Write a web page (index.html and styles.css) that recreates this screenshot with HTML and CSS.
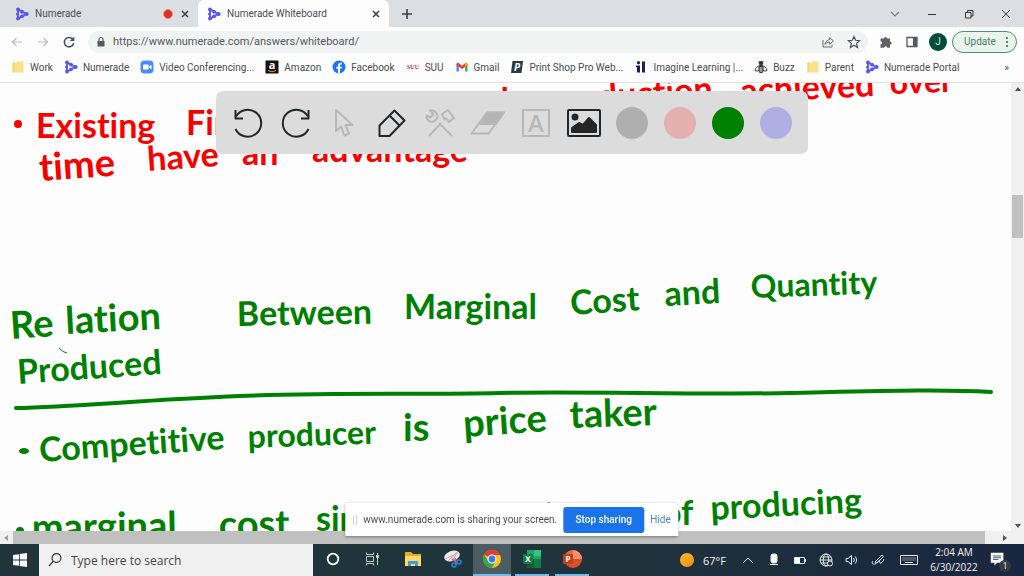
FILE: index.html
```
<!doctype html>
<html lang="en">
<head>
	<meta charset="UTF-8">
	<title>Numerade Whiteboard</title>
	<link rel="stylesheet" href="styles.css">
</head>
<body>
	<svg class="defs" width="0" height="0" aria-hidden="true">
		<symbol id="numerade" viewBox="0 0 14 14">
			<g stroke="#6a66f0" stroke-width="2" fill="none"><path d="M3 2.500L11.500 7L3 11.500M3 2.500V11.500"/></g>
			<g fill="#5b55ee"><circle cx="3" cy="2.600" r="2"/><circle cx="3" cy="11.400" r="2"/><circle cx="11.600" cy="7" r="2"/><circle cx="7" cy="4.700" r="1.900"/><circle cx="7" cy="9.300" r="1.900"/><circle cx="2.500" cy="7" r="1.500"/></g>
		</symbol>
		<symbol id="folder" viewBox="0 0 14 14">
			<path d="M1.500 2.500h4l1 -1h6v11h-11z" fill="#f8e287"/><path d="M1.500 2.500h2v10h-2z" fill="#f1d873"/>
		</symbol>
		<symbol id="cross" viewBox="0 0 10 10"><path d="M2 2l6 6M8 2l-6 6" stroke="#3c4043" stroke-width="1.500"/></symbol>
	</svg>

	<header class="browser">
		<nav class="tabs">
			<div class="tab">
				<svg class="fav"><use href="#numerade"/></svg>
				<span class="title">Numerade</span>
				<span class="rec"></span>
				<button class="x" aria-label="Close tab"><svg width="10" height="10"><use href="#cross"/></svg></button>
			</div>
			<div class="tab active">
				<svg class="fav"><use href="#numerade"/></svg>
				<span class="title">Numerade Whiteboard</span>
				<button class="x" aria-label="Close tab"><svg width="10" height="10"><use href="#cross"/></svg></button>
			</div>
			<button class="newtab" aria-label="New tab"><svg width="12" height="12" viewBox="0 0 12 12"><path d="M6 1v10M1 6h10" stroke="#3c4043" stroke-width="1.600"/></svg></button>
			<div class="win">
				<button aria-label="Search tabs"><svg width="12" height="12" viewBox="0 0 12 12"><path d="M2 4l4 4 4-4" fill="none" stroke="#777b80" stroke-width="1.200"/></svg></button>
				<button aria-label="Minimize"><svg width="12" height="12" viewBox="0 0 12 12"><path d="M2 6.500h8" stroke="#333"/></svg></button>
				<button aria-label="Restore"><svg width="12" height="12" viewBox="0 0 12 12"><path d="M2.500 4.500h5.500v5.500h-5.500zM4.500 4.500v-2h5.500v5.500h-2" fill="none" stroke="#333"/></svg></button>
				<button aria-label="Close"><svg width="12" height="12" viewBox="0 0 12 12"><path d="M2 2l8 8M10 2l-8 8" stroke="#444"/></svg></button>
			</div>
		</nav>

		<div class="address">
			<button aria-label="Back"><svg width="14" height="14" viewBox="0 0 14 14"><path d="M12 7H2.500M6.500 3l-4 4 4 4" fill="none" stroke="#b9bbbe" stroke-width="1.200"/></svg></button>
			<button aria-label="Forward"><svg width="14" height="14" viewBox="0 0 14 14"><path d="M2 7h9.500M7.500 3l4 4-4 4" fill="none" stroke="#b9bbbe" stroke-width="1.200"/></svg></button>
			<button aria-label="Reload"><svg width="14" height="14" viewBox="0 0 14 14"><path d="M11 4.500A4.700 4.700 0 1 0 11.700 8" fill="none" stroke="#4a4d51" stroke-width="1.500"/><path d="M12.300 1.500v4.500h-4.500z" fill="#4a4d51"/></svg></button>
			<div class="omni">
				<svg width="10" height="12" viewBox="0 0 10 12"><path d="M1.500 5h7v5.500h-7z" fill="#55585c"/><path d="M3 5V3.500a2 2 0 0 1 4 0V5" fill="none" stroke="#55585c" stroke-width="1.200"/></svg>
				<input type="text" aria-label="Address" value="https://www.numerade.com/answers/whiteboard/">
				<button aria-label="Share"><svg width="14" height="14" viewBox="0 0 14 14"><path d="M2 5v7h9V9.500" fill="none" stroke="#6b6e72"/><path d="M4 9.500c.5-3 2-4.500 4.500-4.700V2.500L12.500 6 8.500 9.200V7.200C6.500 7.200 5 8 4 9.500z" fill="none" stroke="#6b6e72"/></svg></button>
				<button aria-label="Bookmark"><svg width="14" height="14" viewBox="0 0 14 14"><path d="M7 1.600l1.600 3.700 4 .4-3 2.700.9 4L7 10.300l-3.500 2.100.9-4-3-2.700 4-.4z" fill="none" stroke="#4d5054" stroke-width="1.200"/></svg></button>
			</div>
			<button class="ext" aria-label="Extensions"><svg width="14" height="14" viewBox="0 0 14 14"><path d="M1.500 3.500H5a1.600 1.600 0 1 1 3.200 0H11v3a1.600 1.600 0 1 1 0 3.200v3H8.200a1.500 1.500 0 1 0-3 0H1.500V9.300a1.500 1.500 0 1 0 0-3z" fill="#5f6368"/></svg></button>
			<button class="ext" aria-label="Side panel"><svg width="14" height="14" viewBox="0 0 14 14"><path d="M2 2.500h10v9H2z" fill="none" stroke="#55585c" stroke-width="1.300"/><path d="M8 2.500h4v9H8z" fill="#55585c"/></svg></button>
			<button class="avatar" aria-label="Profile">J</button>
			<button class="update">Update <svg width="4" height="12" viewBox="0 0 4 12" fill="#3c6e57"><circle cx="2" cy="2" r="1.100"/><circle cx="2" cy="6" r="1.100"/><circle cx="2" cy="10" r="1.100"/></svg></button>
		</div>

		<nav class="bookmarks">
			<a href="#"><svg class="fav"><use href="#folder"/></svg>Work</a>
			<a href="#"><svg class="fav"><use href="#numerade"/></svg>Numerade</a>
			<a href="#"><svg class="fav" viewBox="0 0 14 14"><rect x=".5" y=".5" width="13" height="13" rx="4" fill="#4a8cff"/><rect x="3" y="4.500" width="5.500" height="5" rx="1" fill="#fff"/><path d="M9 6.500l2.500-1.700v4.400L9 7.500z" fill="#fff"/></svg>Video Conferencing...</a>
			<a href="#"><svg class="fav" viewBox="0 0 14 14"><rect x=".5" y=".5" width="13" height="13" fill="#111"/><text x="7" y="9" text-anchor="middle" class="glyph" font-size="11" fill="#fff">a</text><path d="M3 10.500q4 2.500 8 0" fill="none" stroke="#f90"/></svg>Amazon</a>
			<a href="#"><svg class="fav" viewBox="0 0 14 14"><circle cx="7" cy="7" r="6.500" fill="#1877f2"/><path d="M6 13.500V8.700H4.300V6.700H6V5.300c0-1.800 1-2.600 2.500-2.600l1.300.1v1.700H9c-.8 0-1 .4-1 1v1.200h1.800l-.3 2H8v4.800z" fill="#fff"/></svg>Facebook</a>
			<a href="#"><svg class="fav" viewBox="0 0 14 14"><text x="7" y="9" text-anchor="middle" class="suu">SUU</text></svg>SUU</a>
			<a href="#"><svg class="fav" viewBox="0 0 14 14"><path d="M1.500 11.500V4h2.300v7.500z" fill="#4285f4"/><path d="M10.200 11.500V4h2.300v7.500z" fill="#34a853"/><path d="M1.500 3.500L3 2.500l4 3.200 4-3.200 1.500 1v1.800L7 9 1.500 5.300z" fill="#ea4335"/><path d="M10.200 4L11 2.600l1.500.9v1.800l-2.300 1.500z" fill="#fbbc04"/></svg>Gmail</a>
			<a href="#"><svg class="fav" viewBox="0 0 14 14"><path d="M2.500 1H13l-1.500 12H1z" fill="#2a3b47"/><text x="7" y="11" text-anchor="middle" class="glyph" font-size="10" font-style="italic" fill="#fff">P</text></svg>Print Shop Pro Web...</a>
			<a href="#"><svg class="fav" viewBox="0 0 14 14" fill="#1d1b6b"><circle cx="4.500" cy="2.700" r="1.600"/><path d="M3 5.500h3V12.500H3zM8 1.500h3V12.500H8zM2 5.500H4v1.500H2z"/></svg>Imagine Learning |...</a>
			<a href="#"><svg class="fav" viewBox="0 0 14 14" fill="none" stroke="#333"><circle cx="7" cy="3.300" r="1.800" fill="#333"/><path d="M7 5.500c-3 0-6 2.500-6 5 1.500 1 3 .5 4-.5M7 5.500c3 0 6 2.500 6 5-1.500 1-3 .5-4-.5M4.500 8h5M4.500 10h5M5 12h4M4.500 1l1.500 1.500M9.500 1L8 2.500"/><path d="M5 6.500h4v5L7 13l-2-1.500z"/></svg>Buzz</a>
			<a href="#"><svg class="fav"><use href="#folder"/></svg>Parent</a>
			<a href="#"><svg class="fav"><use href="#numerade"/></svg>Numerade Portal</a>
			<button class="more" aria-label="More bookmarks">»</button>
		</nav>
	</header>

	<main class="page">
		<!-- whiteboard ink -->
		<svg class="board" viewBox="0 83 1011 448" preserveAspectRatio="xMinYMin slice">
			<g class="ink red">
				<text transform="translate(452 113)">scale</text>
				<text transform="translate(548 112) rotate(-4)">production</text>
				<text transform="translate(741 103) rotate(-3)">achieved</text>
				<text class="small" transform="translate(890 94) rotate(-2)">over</text>
				<circle cx="18" cy="124" r="4"/>
				<text transform="translate(36 138)">Existing</text>
				<text transform="translate(186 135)">Firms</text>
				<text class="big" transform="translate(40 181) rotate(-4)">time</text>
				<text transform="translate(148 171) rotate(-4)">have</text>
				<text transform="translate(242 165)">an</text>
				<text transform="translate(312 162)">advantage</text>
			</g>
			<g class="ink green">
				<text class="big" transform="translate(11 339) rotate(-4)">Re</text>
				<text class="big" transform="translate(66 334) rotate(-3)">lation</text>
				<text transform="translate(237 326) rotate(-1)">Between</text>
				<text transform="translate(404 319)">Marginal</text>
				<text transform="translate(571 315) rotate(-4)">Cost</text>
				<text transform="translate(665 306) rotate(-3)">and</text>
				<text class="small" transform="translate(751 298) rotate(-2)">Quantity</text>
				<text transform="translate(18 384) rotate(-4)">Produced</text>
				<path class="stroke" d="M16 408C75 407 140 400 240 396S420 395 500 393S700 395 790 393S940 389 991 392"/>
				<path class="thin" d="M59 348q3 4 8 5"/>
				<ellipse cx="24" cy="451" rx="5" ry="3"/>
				<text transform="translate(40 462) rotate(-4)">Competitive</text>
				<text class="small" transform="translate(248 448) rotate(-2)">producer</text>
				<text class="big" transform="translate(403 441)">is</text>
				<text class="big" transform="translate(464 437) rotate(-4)">price</text>
				<text class="big" transform="translate(570 428) rotate(-2)">taker</text>
				<circle cx="20" cy="531" r="4"/>
				<text class="big" transform="translate(32 541) rotate(-1)">marginal</text>
				<text class="big" transform="translate(219 538) rotate(-1)">cost</text>
				<text transform="translate(316 531)">simply</text>
				<text transform="translate(430 531)">the</text>
				<text transform="translate(492 526)">cost</text>
				<text transform="translate(662 525)">of</text>
				<text transform="translate(711 520) rotate(-3)">producing</text>
			</g>
		</svg>
		<div class="vbar"><i class="up"></i><b></b><i class="down"></i></div>
		<div class="hbar"><i class="left"></i><b></b><i class="right"></i></div>

		<div class="tools">
			<button aria-label="Undo"><svg viewBox="0 0 36 36" class="dark"><path d="M5.500 24A13.500 13.500 0 1 0 6 11.500"/><path d="M5.500 5v8.500H13"/></svg></button>
			<button aria-label="Redo"><svg viewBox="0 0 36 36" class="dark"><path d="M30.500 24A13.500 13.500 0 1 1 30 11.500"/><path d="M30.500 5v8.500H23"/></svg></button>
			<button aria-label="Select"><svg viewBox="0 0 36 36" class="faint"><path d="M10 5v21l5-4.500 3.500 9 4.500-2-3.500-8.500h7z"/></svg></button>
			<button aria-label="Pen"><svg viewBox="0 0 36 36" class="dark"><path d="M5.500 31V20.500L20.500 5.500l10 10L15.500 31zM15.500 10.500l10 10"/></svg></button>
			<button aria-label="Tools"><svg viewBox="0 0 36 36" class="faint"><path d="M7 31l12-13M30 31L17 18M8 5.500c5-1 9 4 7 8l-3 3c-4 1-8-1-7.500-6l4 2 3-3zM20 9l6-4 6 8-5 4-2.500-3.500-2 1z"/></svg></button>
			<button aria-label="Eraser"><svg viewBox="0 0 36 36" class="faint"><path d="M1.500 28.500L17 7.500h17L18.500 28.500z"/><path d="M9 19L17 7.500h17L26 19z" fill="#b5b5b5"/></svg></button>
			<button aria-label="Text"><svg viewBox="0 0 36 36" class="faint"><path d="M5 5h26v26H5z"/><text x="18" y="27" text-anchor="middle" class="letter">A</text></svg></button>
			<button aria-label="Image"><svg viewBox="0 0 36 36" class="dark"><rect x="2" y="5" width="32" height="26" rx="1"/><circle cx="9" cy="12" r="2.500" fill="#222629"/><path d="M6 27v-4l7-5 4 2 6-7 7 7v7z" fill="#222629"/></svg></button>
			<button aria-label="Black"><span class="dot gray"></span></button>
			<button aria-label="Red"><span class="dot pink"></span></button>
			<button aria-label="Green"><span class="dot green"></span></button>
			<button aria-label="Blue"><span class="dot blue"></span></button>
		</div>
	</main>

	<aside class="sharing">
		<span class="grip"></span>
		<span class="msg">www.numerade.com is sharing your screen.</span>
		<button class="stop">Stop sharing</button>
		<a href="#">Hide</a>
	</aside>

	<footer class="taskbar">
		<button class="start" aria-label="Start"><svg width="14" height="14" viewBox="0 0 14 14" fill="#fff"><path d="M0 2l6-.8v5.400H0zM6.800 1.100L14 0v6.600H6.800zM0 7.400h6v5.400L0 12zM6.800 7.400H14V14l-7.200-1.100z"/></svg></button>
		<label class="search"><svg width="16" height="16" viewBox="0 0 16 16" fill="none" stroke="#333" stroke-width="1.200"><circle cx="9.500" cy="6" r="4.400"/><path d="M6.300 9.200L2 14"/></svg><input type="text" placeholder="Type here to search" aria-label="Type here to search"></label>
		<nav class="apps">
			<button aria-label="Cortana"><svg viewBox="0 0 20 20"><circle cx="10" cy="10" r="5.300" fill="none" stroke="#fff" stroke-width="1.800"/></svg></button>
			<button aria-label="Task View"><svg viewBox="0 0 20 20" fill="none" stroke="#c5ccd0"><path d="M3.500 7.500h7v5h-7zM3.500 3.500v2h7v-2M3.500 16.500v-2h7v2M14.500 4v12"/><path d="M13.500 6.500h2v2h-2z" fill="#fff"/></svg></button>
			<button aria-label="File Explorer"><svg viewBox="0 0 20 20"><path d="M2 3h6l2 2h8v12H2z" fill="#e9a92b"/><path d="M2 7h16v10H2z" fill="#ffd868"/><path d="M5 17v-5h10v5h-3v-2H8v2z" fill="#3f9be0"/></svg></button>
			<button aria-label="Snip"><svg viewBox="0 0 20 20"><ellipse cx="9" cy="7" rx="8" ry="5" fill="#f3e8ec" transform="rotate(-20 9 7)"/><path d="M2 10L15 4M5 12l9-9M9 12l5-8" stroke="#d9a3ad" fill="none"/><path d="M9 10l5 4M12 9l1 5" stroke="#e55360" stroke-width="1.500"/><g fill="none" stroke="#2b88d8" stroke-width="1.500"><circle cx="11" cy="16" r="2"/><circle cx="16" cy="13" r="2"/></g></svg></button>
			<button class="open current" aria-label="Chrome"><svg viewBox="0 0 20 20"><circle cx="10" cy="10" r="9" fill="#fbc116"/><path d="M10 10L2.200 5.500A9 9 0 0 1 17.800 5.500H10z" fill="#e33b2e"/><path d="M2.200 5.500A9 9 0 0 0 9.500 19L14 12 6 12z" fill="#2da94f"/><path d="M10 5.500h7.800" stroke="#e33b2e"/><circle cx="10" cy="10" r="4.500" fill="#fff"/><circle cx="10" cy="10" r="3.400" fill="#3b78e7"/></svg></button>
			<button class="open" aria-label="Excel"><svg viewBox="0 0 20 20"><path d="M5 1h14v18H5z" fill="#21a366"/><path d="M12 1h7v6h-7z" fill="#33c481"/><path d="M5 10h14v9H5z" fill="#107c41"/><path d="M5 10h7v9H5z" fill="#185c37"/><rect x="1" y="5" width="10" height="10" rx="1" fill="#107c41"/><text x="6" y="13" text-anchor="middle" class="glyph" font-size="8" fill="#fff">X</text></svg></button>
			<button class="open" aria-label="PowerPoint"><svg viewBox="0 0 20 20"><circle cx="11" cy="10" r="9" fill="#d35230"/><path d="M11 1a9 9 0 0 1 9 9h-9z" fill="#ff8f6b"/><path d="M2 10a9 9 0 0 1 9-9v9z" fill="#ed6c47"/><rect x="1" y="5" width="10" height="10" rx="1" fill="#c43e1c"/><text x="6" y="13" text-anchor="middle" class="glyph" font-size="8" fill="#fff">P</text></svg></button>
		</nav>
		<div class="tray">
			<button class="weather"><span class="sun"></span>67°F</button>
			<button aria-label="Hidden icons"><svg viewBox="0 0 16 16"><path d="M3 11l5-5 5 5"/></svg></button>
			<button aria-label="Microphone"><svg viewBox="0 0 16 16"><rect x="5" y="2" width="6" height="9" rx="2" fill="#fff"/><path d="M4 12.500h8" stroke="#fff"/></svg></button>
			<button aria-label="Battery"><svg viewBox="0 0 16 16"><path d="M2.500 5.500h10v6h-10zM13.500 7v3"/><path d="M3 6h5v5H3z" fill="#fff" stroke="none"/></svg></button>
			<button aria-label="Network"><svg viewBox="0 0 16 16"><circle cx="8" cy="8" r="6"/><ellipse cx="8" cy="8" rx="2.700" ry="6"/><path d="M2 8h12M3 5h10M3 11h10"/><circle cx="12" cy="11.500" r="2.500" fill="#1c2c3c"/></svg></button>
			<button aria-label="Volume"><svg viewBox="0 0 16 16"><path d="M2 6.500h2L7.500 3.500v9L4 9.500H2zM9.500 6q1.500 2 0 4M11.500 4.500q2.500 3.500 0 7"/></svg></button>
			<button aria-label="Ink"><svg viewBox="0 0 16 16"><path d="M5 10L12 3l1.500 1.500L7 11zM3 9c-2 2 0 4 2 3s3-3 4-3 0 3 2 2 2-2 3-4"/></svg></button>
			<button class="wide" aria-label="Touch keyboard"><svg viewBox="0 0 20 16"><path d="M1.500 3.500h17v9h-17z"/><path d="M3.500 6h13M3.500 8h13" stroke-dasharray="1 1"/><path d="M6 10.500h8"/></svg></button>
			<time class="clock"><span>2:04 AM</span><span>6/30/2022</span></time>
			<button class="notes" aria-label="Notifications"><svg viewBox="0 0 20 20"><path d="M2 2h14v11H9l-3 3v-3H2z" fill="#fff" stroke="none"/><path d="M4.500 5.500h9M4.500 7.500h9M4.500 9.500h6" stroke="#34465a"/></svg><span class="badge">1</span></button>
		</div>
	</footer>
</body>
</html>
```
FILE: styles.css
```
* { margin: 0; padding: 0; box-sizing: border-box; }
body { display: flex; flex-direction: column; height: 100vh; overflow: hidden; background: #fdfdfd; font-family: Roboto, "Open Sans", sans-serif; font-size: 10px; color: #4a4d51; }
button, input { font: inherit; color: inherit; background: none; border: none; outline: none; }
button { display: flex; align-items: center; justify-content: center; flex: none; }
a { color: inherit; text-decoration: none; }
svg { display: block; flex: none; }
.defs { position: absolute; }
.fav { width: 14px; height: 14px; }
.glyph { font-family: "Open Sans", sans-serif; font-weight: 700; }
.suu { font: 700 6px "Liberation Serif", serif; fill: #d0283c; }

/* tab strip */
.tabs { display: flex; height: 27px; background: #dcdfe2; }
.tab { display: flex; align-items: center; width: 198px; padding: 0 7px 0 15px; gap: 6px; }
.tab .title { flex: 1; }
.tab.active { width: 191px; padding-left: 9px; background: #fdfdfd; border-radius: 6px 6px 0 0; }
.rec { width: 10px; height: 10px; border-radius: 50%; background: #d93025; border: 1px solid #eb8e88; }
.x { width: 12px; height: 12px; }
.newtab { width: 36px; }
.win { display: flex; margin-left: auto; }
.win button { width: 37px; }

/* address row */
.address { display: flex; align-items: center; height: 29px; padding: 0 7px 0 4px; }
.address > button { width: 26px; height: 22px; }
.omni { display: flex; align-items: center; flex: 1; height: 22px; margin: 0 5px 0 6px; padding: 0 6px; gap: 7px; border-radius: 11px; background: #f1f3f3; }
.omni svg { margin-left: 2px; }
.omni input { flex: 1; min-width: 0; font-size: 11px; color: #55585c; }
.omni button { width: 19px; }
.address .avatar { width: 18px; height: 18px; margin: 0 5px 0 4px; border-radius: 50%; background: #004d38; color: #d7e8e0; }
.address .update { width: 65px; gap: 9px; padding-left: 4px; border: 1px solid #4f9273; border-radius: 11px; background: #eaf4ee; color: #4d7d67; }

/* bookmarks */
.bookmarks { display: flex; align-items: center; height: 27px; padding: 0 15px 4px 11px; gap: 11px; border-bottom: 1px solid #dfe1e3; white-space: nowrap; }
.bookmarks a { display: flex; align-items: center; gap: 5px; }
.more { margin-left: auto; }

/* page */
.page { position: relative; display: grid; grid-template-columns: 1fr 13px; grid-template-rows: minmax(0, 1fr) 13px; flex: 1; min-height: 0; }
.board { width: 100%; height: 100%; min-height: 0; }
.ink { font: 700 34px Lato, sans-serif; font-variant-ligatures: none; }
.ink .big { font-size: 38px; }
.ink .small { font-size: 32px; }
.red { fill: #f80000; }
.green { fill: #008000; }
.stroke { fill: none; stroke: #008000; stroke-width: 4; stroke-linecap: round; }
.thin { fill: none; stroke: #008000; stroke-width: 1; }
.vbar { display: flex; flex-direction: column; align-items: center; background: #f0f0f0; padding: 4px 0 3px; }
.vbar b { width: 11px; height: 43px; margin: 104px 0 auto; background: #c1c1c1; }
.hbar { grid-column: 1 / 3; display: flex; align-items: center; background: #f0f0f0; padding: 0 17px 0 4px; }
.hbar b { flex: 1; height: 13px; margin: 0 18px 0 5px; background: #c0c0c0; }
.vbar i, .hbar i { border: 3px solid transparent; }
.vbar .up { border-top: none; border-bottom: 4px solid #505050; }
.vbar .down { border-bottom: none; border-top: 4px solid #505050; }
.hbar .left { border-left: none; border-right: 4px solid #a0a0a0; }
.hbar .right { border-right: none; border-left: 4px solid #505050; }

.tools { position: absolute; top: 8px; left: 50%; transform: translateX(-50%); display: flex; padding: 0 8px; border-radius: 7px; background: #dcdcdc; }
.tools button { width: 48px; height: 63px; }
.tools svg { width: 36px; height: 36px; fill: none; stroke-width: 2; stroke-linejoin: round; }
.dark { stroke: #222629; }
.faint { stroke: #b8b8b8; }
.letter { font: 600 24px "Open Sans", sans-serif; fill: #b8b8b8; stroke: none; }
.dot { width: 32px; height: 32px; border-radius: 50%; }
.dot.gray { background: #afafaf; }
.dot.pink { background: #e3afaf; }
.dot.green { background: #008000; }
.dot.blue { background: #afafe3; }

/* screen share notice */
.sharing { position: fixed; bottom: 40px; left: 50%; transform: translateX(-50%); display: flex; align-items: center; height: 33px; padding: 0 8px; gap: 6px; background: #fff; box-shadow: 0 1px 3px rgba(0, 0, 0, .4); white-space: nowrap; }
.grip { width: 4px; height: 10px; border: solid #ccc; border-width: 0 1px; }
.stop { width: 81px; height: 26px; border-radius: 3px; background: #1a73e8; color: #fff; font-weight: 500; }
.sharing a { color: #4a84e0; }

/* taskbar */
.taskbar { display: flex; height: 32px; background: linear-gradient(90deg, #20343b, #20343b 55%, #19263f); color: #f2f2f2; font-family: "Open Sans", sans-serif; }
.start { width: 39px; }
.search { display: flex; align-items: center; width: 274px; padding: 0 8px; gap: 8px; background: #f0f0f0; color: #333; font-size: 12px; }
.search input { flex: 1; min-width: 0; }
.search input::placeholder { color: #444; opacity: 1; }
.apps { display: flex; }
.apps button { width: 40px; border-bottom: 2px solid transparent; }
.apps svg { width: 20px; height: 20px; }
.apps .open { border-color: #76b9ed; width: 34px; margin: 0 3px; }
.apps .current { width: 38px; margin: 0 1px 0 0; background: #4b5c63; }
.tray { display: flex; align-items: center; margin-left: auto; padding-right: 9px; }
.tray button { width: 26px; height: 32px; }
.tray svg { width: 16px; height: 16px; fill: none; stroke: #e4e8ea; stroke-width: 1; }
.tray .weather { width: auto; gap: 9px; margin-right: 9px; font-size: 11px; }
.sun { width: 14px; height: 14px; border-radius: 50%; background: linear-gradient(135deg, #ffbe2e, #f08a10); }
.tray .wide { width: 36px; }
.tray .wide svg { width: 20px; }
.clock { display: flex; flex-direction: column; width: 54px; line-height: 15px; text-align: center; }
.tray .notes { position: relative; width: 34px; }
.notes svg { width: 18px; height: 18px; }
.badge { position: absolute; right: 4px; bottom: 4px; width: 12px; height: 12px; border-radius: 50%; background: #333a40; font-size: 9px; line-height: 12px; }
```
